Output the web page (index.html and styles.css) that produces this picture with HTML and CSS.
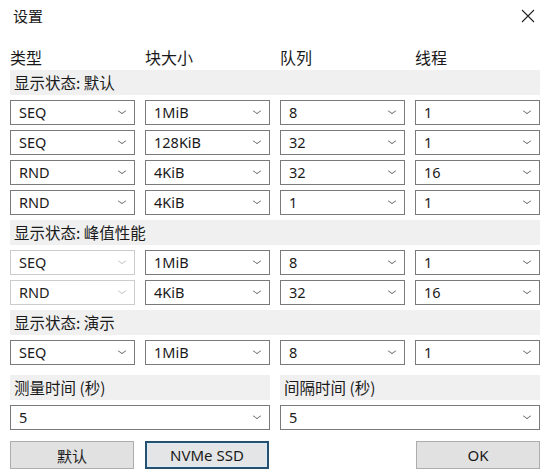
FILE: index.html
```html
<!DOCTYPE html>
<html lang="zh">
<head>
<meta charset="utf-8">
<title>设置</title>
<link rel="stylesheet" href="styles.css">
</head>
<body>
<div class="dialog">
  <div class="titlebar">
    <span class="title">设置</span>
    <svg class="close" width="14" height="14" viewBox="0 0 14 14"><path d="M1 1L13 13M13 1L1 13" stroke="#222" stroke-width="1.1" fill="none"/></svg>
  </div>
  <div class="grid heads">
    <div>类型</div><div>块大小</div><div>队列</div><div>线程</div>
  </div>

  <div class="band">显示状态: 默认</div>
  <div class="grid row">
    <div class="sel"><span>SEQ</span><i class="chev"></i></div>
    <div class="sel"><span>1MiB</span><i class="chev"></i></div>
    <div class="sel"><span>8</span><i class="chev"></i></div>
    <div class="sel"><span>1</span><i class="chev"></i></div>
  </div>
  <div class="grid row">
    <div class="sel"><span>SEQ</span><i class="chev"></i></div>
    <div class="sel"><span>128KiB</span><i class="chev"></i></div>
    <div class="sel"><span>32</span><i class="chev"></i></div>
    <div class="sel"><span>1</span><i class="chev"></i></div>
  </div>
  <div class="grid row">
    <div class="sel"><span>RND</span><i class="chev"></i></div>
    <div class="sel"><span>4KiB</span><i class="chev"></i></div>
    <div class="sel"><span>32</span><i class="chev"></i></div>
    <div class="sel"><span>16</span><i class="chev"></i></div>
  </div>
  <div class="grid row">
    <div class="sel"><span>RND</span><i class="chev"></i></div>
    <div class="sel"><span>4KiB</span><i class="chev"></i></div>
    <div class="sel"><span>1</span><i class="chev"></i></div>
    <div class="sel"><span>1</span><i class="chev"></i></div>
  </div>

  <div class="band">显示状态: 峰值性能</div>
  <div class="grid row">
    <div class="sel disabled"><span>SEQ</span><i class="chev"></i></div>
    <div class="sel"><span>1MiB</span><i class="chev"></i></div>
    <div class="sel"><span>8</span><i class="chev"></i></div>
    <div class="sel"><span>1</span><i class="chev"></i></div>
  </div>
  <div class="grid row">
    <div class="sel disabled"><span>RND</span><i class="chev"></i></div>
    <div class="sel"><span>4KiB</span><i class="chev"></i></div>
    <div class="sel"><span>32</span><i class="chev"></i></div>
    <div class="sel"><span>16</span><i class="chev"></i></div>
  </div>

  <div class="band">显示状态: 演示</div>
  <div class="grid row">
    <div class="sel"><span>SEQ</span><i class="chev"></i></div>
    <div class="sel"><span>1MiB</span><i class="chev"></i></div>
    <div class="sel"><span>8</span><i class="chev"></i></div>
    <div class="sel"><span>1</span><i class="chev"></i></div>
  </div>

  <div class="halves">
    <div class="half">
      <div class="band">测量时间 (秒)</div>
      <div class="sel wide"><span>5</span><i class="chev"></i></div>
    </div>
    <div class="half">
      <div class="band">间隔时间 (秒)</div>
      <div class="sel wide"><span>5</span><i class="chev"></i></div>
    </div>
  </div>

  <div class="grid buttons">
    <div class="btn">默认</div>
    <div class="btn focused">NVMe SSD</div>
    <div></div>
    <div class="btn ok">OK</div>
  </div>
</div>
</body>
</html>
```

FILE: styles.css
```css
* { box-sizing: border-box; }
html, body {
  margin: 0;
  padding: 0;
  background: #ffffff;
}
body {
  font-family: "Noto Sans CJK SC", "Noto Sans", "Liberation Sans", sans-serif;
  font-size: 14.5px;
  color: #1a1a1a;
}
.dialog {
  width: 546px;
  height: 474px;
  padding: 0 6px 0 10px;
}
.titlebar {
  height: 47px;
  padding-top: 6px;
  display: flex;
  justify-content: space-between;
  align-items: flex-start;
  line-height: 20px;
  font-size: 15px;
}
.title {
  margin-left: 3px;
}
.close {
  margin-top: 3px;
  margin-right: 5px;
}
.grid {
  display: grid;
  grid-template-columns: repeat(4, 125px);
  column-gap: 10px;
}
.heads {
  height: 20px;
  line-height: 20px;
  margin-bottom: 3px;
  font-size: 16px;
}
.band {
  height: 25px;
  line-height: 25px;
  background: #f0f0f0;
  padding-left: 4px;
  font-size: 15.5px;
  margin-top: 5px;
}
.heads + .band { margin-top: 0; }
.row {
  margin-top: 5px;
}
.sel {
  height: 25px;
  border: 1px solid #7a7a7a;
  background: #fff;
  display: flex;
  align-items: center;
  justify-content: space-between;
  padding: 0 7px 0 8px;
  font-family: "Noto Sans", "Liberation Sans", sans-serif;
  font-size: 14.5px;
  line-height: 23px;
}
.sel.disabled {
  border-color: #cccccc;
}
.sel.disabled span { color: #222; }
.chev {
  display: block;
  width: 6px;
  height: 6px;
  border-right: 1px solid #6a6a6a;
  border-bottom: 1px solid #6a6a6a;
  transform: scaleY(0.7) rotate(45deg);
  margin-top: -4px;
  margin-right: 2px;
}
.sel.disabled .chev {
  border-color: #c4c4c4;
}
.halves {
  display: grid;
  grid-template-columns: 260px 260px;
  column-gap: 10px;
  margin-top: 5px;
}
.half .band { margin-top: 5px; }
.half .sel { margin-top: 5px; }
.buttons {
  margin-top: 11px;
}
.btn {
  width: 124px;
  height: 28px;
  background: #e1e1e1;
  border: 1px solid #adadad;
  display: flex;
  align-items: center;
  justify-content: center;
  font-size: 15px;
}
.btn.focused {
  border: 2px solid #25506e;
  box-shadow: inset 0 0 0 1px #d9ecf8;
  background: #e3e5e6;
  font-family: "Noto Sans", "Liberation Sans", sans-serif;
}
.btn.ok {
  margin-left: 1px;
  font-family: "Noto Sans", "Liberation Sans", sans-serif;
}
```
